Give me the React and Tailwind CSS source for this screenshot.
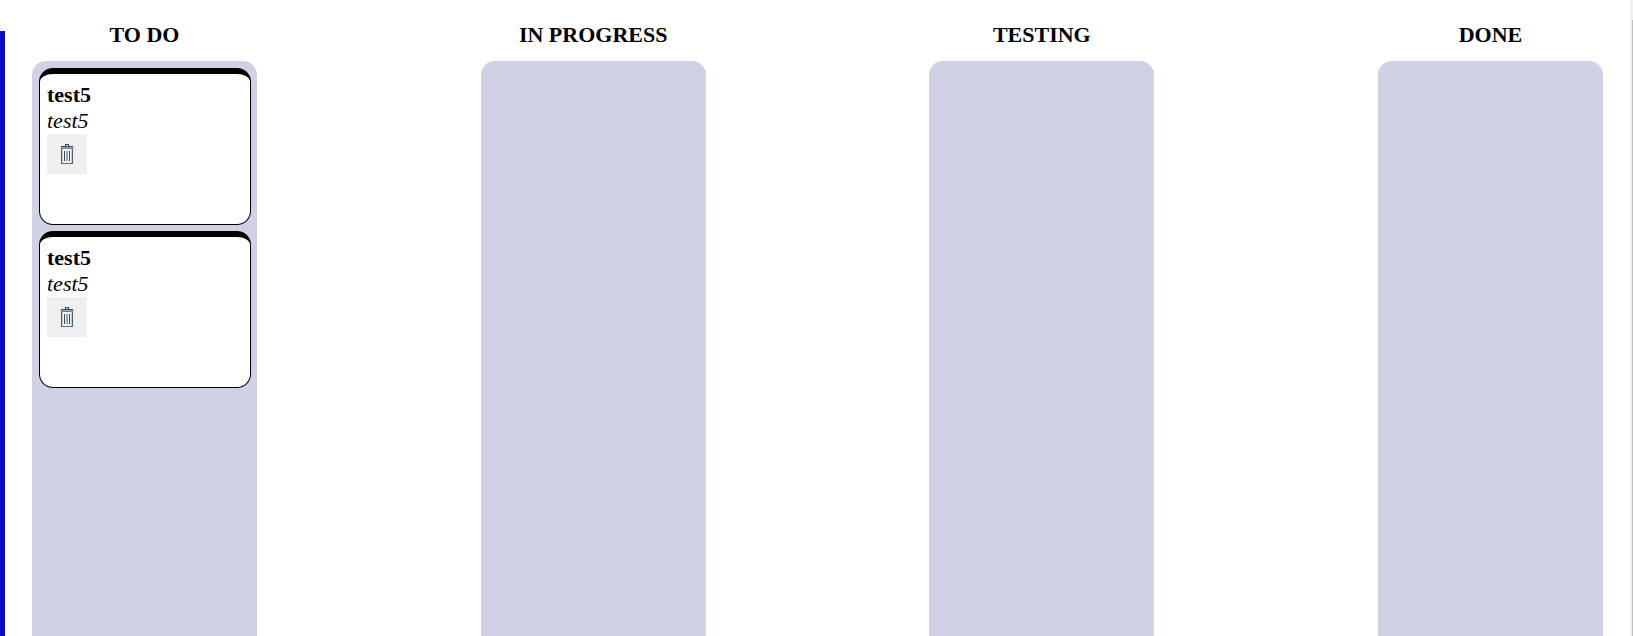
const columns = [
  {
    title: "TO DO",
    cards: [
      { id: 1, title: "test5", description: "test5" },
      { id: 2, title: "test5", description: "test5" },
    ],
  },
  { title: "IN PROGRESS", cards: [] },
  { title: "TESTING", cards: [] },
  { title: "DONE", cards: [] },
];

function TrashIcon() {
  return (
    <svg width="14" height="20" viewBox="0 0 14 20" shapeRendering="crispEdges" aria-hidden="true">
      <path d="M2 5h10v14H2z" fill="#f7f8f9" />
      <path d="M5 0h4v2H8V1H6v1H5z" fill="#34495e" />
      <path d="M0 3h14v1H0z" fill="#9aa6b1" />
      <path d="M1 2h12v1H1z" fill="#34495e" />
      <path d="M1 4h12v1H1z" fill="#71808f" />
      <path d="M1 5h1v14H1zM12 5h1v14h-1z" fill="#4d5f71" />
      <path d="M2 5h1v14H2zM11 5h1v14h-1z" fill="#c3cad1" />
      <path d="M1 19h12v1H1z" fill="#5d6d7e" />
      <path d="M4 7h1v10H4zM9 7h1v10H9z" fill="#34495e" />
      <path d="M6 7h2v10H6z" fill="#98a3ad" />
    </svg>
  );
}

function Card({ title, description }) {
  return (
    <article className="h-[157px] rounded-[14px] border border-t-[6px] border-black bg-white px-[7px] pt-2">
      <h3 className="font-bold">{title}</h3>
      <p className="italic">{description}</p>
      <button type="button" aria-label="Delete" className="flex size-10 items-center justify-center bg-[#efefef]">
        <TrashIcon />
      </button>
    </article>
  );
}

export default function App() {
  return (
    <div className="flex h-screen overflow-hidden bg-white font-['Liberation_Serif',serif] text-[22px] leading-[26px] text-black">
      <div className="mt-[31px] w-[5px] shrink-0 bg-[#0b0bc4]" />
      <main className="flex flex-1 justify-between px-[27px] pt-[22px]">
        {columns.map((column) => (
          <section key={column.title} className="flex w-[225px] flex-col gap-[13px]">
            <h2 className="text-center font-bold">{column.title}</h2>
            <div className="flex flex-1 flex-col gap-[6px] rounded-t-[14px] bg-[#d1d1e6] py-[7px] pr-[6px] pl-[7px]">
              {column.cards.map((card) => (
                <Card key={card.id} title={card.title} description={card.description} />
              ))}
            </div>
          </section>
        ))}
      </main>
      <div className="flex w-[3px] shrink-0 justify-end bg-[#f0f0f0] pt-5">
        <div className="w-px bg-[#c0c0c0]" />
      </div>
    </div>
  );
}
